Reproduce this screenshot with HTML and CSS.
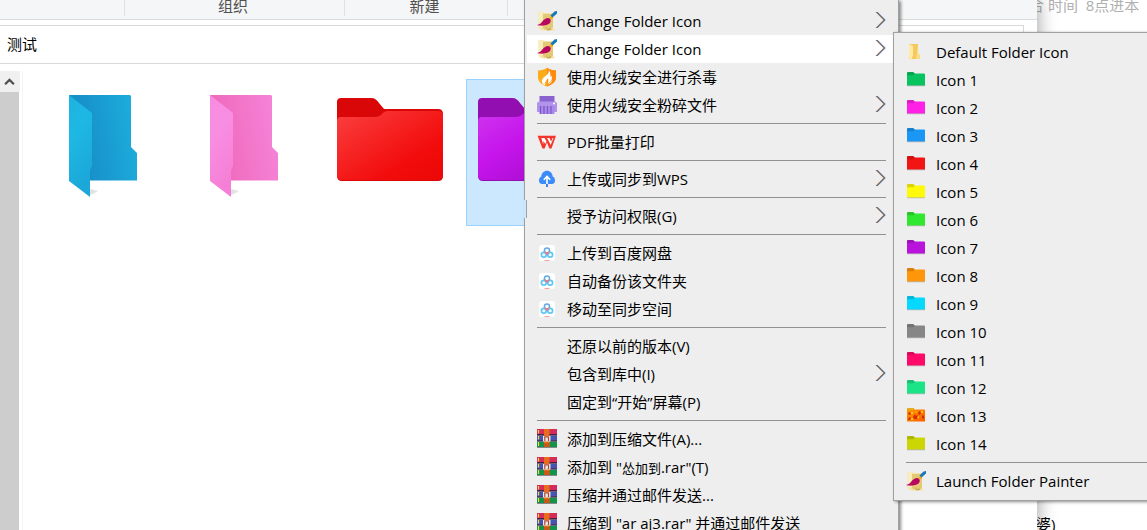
FILE: index.html
```html
<!DOCTYPE html>
<html lang="zh-CN">
<head>
    <meta charset="UTF-8">
    <meta name="viewport" content="width=device-width, initial-scale=1.0">
    <title>测试</title>
    <link rel="stylesheet" href="styles.css">
</head>
<body>
    <!-- shared icons -->
    <svg class="defs" aria-hidden="true">
        <defs>
            <linearGradient id="blue-back" x1="0" y1="0.6" x2="1" y2="0.4"><stop offset="0.2" stop-color="#178fc8"/><stop offset="1" stop-color="#1daddd"/></linearGradient>
            <linearGradient id="blue-front" x1="0" y1="0" x2="0.3" y2="1"><stop offset="0" stop-color="#1fb2e0"/><stop offset="0.4" stop-color="#1eb8e4"/><stop offset="1" stop-color="#1ba7d8"/></linearGradient>
            <linearGradient id="pink-back" x1="0" y1="0.6" x2="1" y2="0.4"><stop offset="0.2" stop-color="#f06cbe"/><stop offset="1" stop-color="#f583d8"/></linearGradient>
            <linearGradient id="pink-front" x1="0" y1="0" x2="0.3" y2="1"><stop offset="0" stop-color="#f78bdf"/><stop offset="0.4" stop-color="#f88ee2"/><stop offset="1" stop-color="#f57fd6"/></linearGradient>
            <linearGradient id="red-front" x1="0" y1="0" x2="1" y2="1"><stop offset="0" stop-color="#fb3f3f"/><stop offset="0.7" stop-color="#f20c0c"/><stop offset="1" stop-color="#ec0808"/></linearGradient>
            <linearGradient id="purple-front" x1="0" y1="0" x2="1" y2="1"><stop offset="0" stop-color="#cf35ee"/><stop offset="0.4" stop-color="#c514ec"/><stop offset="1" stop-color="#9c0cc0"/></linearGradient>
            <linearGradient id="lava" x1="0" y1="0" x2="1" y2="1"><stop offset="0" stop-color="#ff9d00"/><stop offset="1" stop-color="#ff5a00"/></linearGradient>
            <linearGradient id="shade"><stop offset="0" stop-color="#000" stop-opacity="0.12"/><stop offset="1" stop-color="#000" stop-opacity="0"/></linearGradient>
        </defs>
        <symbol id="painter" viewBox="0 0 20 20">
            <path d="M1.500 1H6l1 1h9v15l2 2-4 .7-5-.5-2 .3-3-.5-2.500-2z" fill="#f3e3a4"/>
            <path d="M6 3h10v13l-2 3-3-2-3 2-2-2z" fill="#e4c873"/>
            <path d="M1.500 1H6v15l-4 1z" fill="#f8edbd"/>
            <path d="M9 16l2 2 2-1 1 2-4 .6z" fill="#c5a65a"/>
            <path d="M0 14c2.500-.3 4-1.500 5.500-3.700C7.500 7.500 11 6 13 7.700c1.600 1.600.6 4.600-2.300 5.900-3.200 1.400-7.700 1.400-10.700.4z" fill="#b7065f"/>
            <path d="M0 14c2 .4 4 .2 6-.8l-3 1.800z" fill="#f178b0"/>
            <path d="M12.500 7L14.500 4.500 16.500 6.500l-2.300 2z" fill="#efab18"/>
            <path d="M13.500 4.500L17.500.5l2.500-.5v2.500L15.500 6.500z" fill="#1478bd"/>
        </symbol>
        <symbol id="shield" viewBox="0 0 20 20">
            <path d="M1 3.500C4.500 3.400 7.500 2.500 10 .7c2.500 1.800 5.500 2.700 9 2.800v6.800c0 4.200-3.200 7.200-9 9.300-5.800-2.100-9-5.100-9-9.300z" fill="#faad19"/>
            <path d="M10 .7c2.500 1.800 5.500 2.700 9 2.800v6.800c0 4.200-3.200 7.200-9 9.300z" fill="#ff8a0c"/>
            <path d="M11.800 3c.5 3.500-2 5-4.800 7.200-3 2.600-3 5.800 1 8.100-.5-3.300 1.500-4.800 3-7 .8 2.200.2 3.700-.6 5.500 3.300-1.800 5.400-4.500 4.200-8.300-.3 1-.6 1.300-1.200 1.500.4-2.700-.2-4.900-1.600-7z" fill="#fff"/>
            <path d="M11 18c2.300-1 4-2.700 4.300-5.200-1 1.500-3 2.700-4.300 5.200z" fill="#ffe0a8"/>
        </symbol>
        <symbol id="shredder" viewBox="0 0 20 20">
            <path d="M2.500 1h15v7h-15z" fill="#8a63cf"/>
            <path d="M0 8L2 6.500h16L20 8v9H0z" fill="#b193ec"/>
            <path d="M2.500 11h15v8h-15z" fill="#a98aea"/>
            <path d="M3.500 11v8M7 11v8M10.500 11v8M14 11v8" stroke="#7d57c4" stroke-width="1.200"/>
            <path d="M16 8.500h2" stroke="#fff" stroke-width="1.300"/>
        </symbol>
        <symbol id="wps-pdf" viewBox="0 0 20 20">
            <path d="M.6 3.700H19L14.500 16.500h-2.200L10 10.500l-2.400 6H5.400z" fill="#f5352c"/>
            <path d="M4.300 6h3.200l2 3.200-1.200 2.800-1.900-3-.2 3.500z" fill="#fff"/>
            <path d="M10 6h2.400l1.800 3.700L15.500 6h.9l-2.700 7-2.500-5z" fill="#fff"/>
        </symbol>
        <symbol id="cloud-up" viewBox="0 0 20 20">
            <path d="M5 15c-2 0-3-1.600-3-3.600 0-2 1-3.300 2.300-3.900C4.500 4 7 1.700 10 1.700S15.500 4 15.700 7.500C17 8 18 9.300 18 11.400c0 2-1 3.600-3 3.600z" fill="#3d8bf8"/>
            <path d="M10 15V7.800M6.800 10.800L10 7.500l3.200 3.300" stroke="#fff" stroke-width="1.600" fill="none"/>
            <path d="M10 15v3" stroke="#2f75dc" stroke-width="1.800"/>
        </symbol>
        <symbol id="netdisk" viewBox="0 0 20 20">
            <rect x="2" y="2" width="16" height="16" rx="3" fill="#fff"/>
            <circle cx="10" cy="7.700" r="2.600" fill="none" stroke="#62a9e3" stroke-width="1.500"/>
            <circle cx="6.800" cy="11.800" r="2.400" fill="none" stroke="#5cc8f5" stroke-width="1.700"/>
            <circle cx="13.200" cy="11.800" r="2.400" fill="none" stroke="#5cc8f5" stroke-width="1.700"/>
            <path d="M8 8.700l2 2.100 2-2.100" fill="none" stroke="#f07580" stroke-width="1.500"/>
            <path d="M7.500 17.500h5" stroke="#f4a0a6" stroke-width="1"/>
        </symbol>
        <symbol id="rar" viewBox="0 0 20 20">
            <path d="M0 0h20v5.500H0z" fill="#d42b59"/>
            <path d="M0 6.500h20v5.500H0z" fill="#4654b0"/>
            <path d="M0 12.500h20v6H0z" fill="#12924a"/>
            <path d="M0 5h20v1.500H0zM0 11.500h20v1H0z" fill="#442043"/>
            <path d="M0 18.500h20" stroke="#888" stroke-width="1"/>
            <path d="M7 0h5.500v18H7z" fill="#e96b1c"/>
            <path d="M1.500 1v3.500M1.500 7v3.500M1.500 13v4" stroke="#f5d73b" stroke-width="1.200"/>
            <path d="M6 7h7.500v5.500H6z" fill="#e6ebef"/>
            <path d="M7.800 12V7.800h3.700V12" fill="none" stroke="#b8432a" stroke-width="1.200"/>
            <path d="M7 14h5.500v4H7z" fill="#c95a16"/>
        </symbol>
        <symbol id="folder" viewBox="0 0 20 20">
            <path d="M1 3q0-1 1-1h5.200l1.600 1.500H18q1 0 1 1V15.500H1z" fill="currentColor"/>
            <path d="M1 3q0-1 1-1h5.200L9 3.700 7.500 5.200H1z" fill="#000" fill-opacity="0.15"/>
            <path d="M1 15.800h18" stroke="#000" stroke-opacity="0.25" stroke-width="0.800"/>
        </symbol>
        <symbol id="folder-lava" viewBox="0 0 20 20">
            <path d="M1 3q0-1 1-1h5.200l1.600 1.500H18q1 0 1 1V15.500H1z" fill="url(#lava)"/>
            <path d="M1 2h6.500L9 4H1z" fill="#dfae21"/>
            <path d="M2 7l2-1 1 2-2 1zM7 11l2-3 1 2 2-1-1 4H8zM13 5l2 1-1 3-2-1zM16 9l2 1v3l-2-1zM3 11l2 1-1 2H2z" fill="#d32c06"/>
            <path d="M5 6h2v2H5zM11 11l2-1v3zM15 5h2v2h-2zM5 12h2v2H5zM9 5l2 1-1 1z" fill="#ffc61c"/>
        </symbol>
        <symbol id="folder-default" viewBox="0 0 20 20">
            <path d="M3 2h9v10l2 2v3H3z" fill="#f5c95f"/>
            <path d="M12 3v8l2 2v4h-4z" fill="#fbdc7e"/>
            <path d="M3 2l4 2v10l-1 1v3.500L3 16z" fill="#ffeaa6"/>
        </symbol>
        <symbol id="open-folder-shadow" viewBox="0 0 128 128">
            <path d="M93 100v-5l7 2-2 3zM46 115v-6l8 2-3 2z" fill="url(#shade)"/>
        </symbol>
        <symbol id="arrow" viewBox="0 0 12 18">
            <path d="M.6 1l8 8-8 8" fill="none" stroke="#f0a354" stroke-width="0.700"/>
            <path d="M2.400 1l8 8-8 8" fill="none" stroke="#4c8fe0" stroke-width="0.700"/>
            <path d="M1.500 1l8 8-8 8" fill="none" stroke="#101018" stroke-width="0.900"/>
        </symbol>
    </svg>

    <main class="explorer">
        <header class="ribbon">
            <div class="group group-first"></div>
            <div class="group group-organize">组织</div>
            <div class="group group-new">新建</div>
        </header>
        <div class="address">测试</div>
        <div class="content">
            <div class="scrollbar">
                <button class="scroll-up" aria-label="向上滚动">
                    <svg viewBox="0 0 10 8"><path d="M1 6.500l4-4 4 4" fill="none" stroke="#505050" stroke-width="2"/></svg>
                </button>
                <div class="thumb"></div>
            </div>
            <div class="files">
                <div class="file">
                    <svg viewBox="0 0 128 128">
                        <use href="#open-folder-shadow"/>
                        <path d="M25 15h61l1 1v51l6 6v27.500H40L25 80z" fill="url(#blue-back)"/>
                        <path d="M25 15l23 18v53l-2 4v27L25 101z" fill="url(#blue-front)"/>
                    </svg>
                </div>
                <div class="file">
                    <svg viewBox="0 0 128 128">
                        <use href="#open-folder-shadow"/>
                        <path d="M25 15h61l1 1v51l6 6v27.500H40L25 80z" fill="url(#pink-back)"/>
                        <path d="M25 15l23 18v53l-2 4v27L25 101z" fill="url(#pink-front)"/>
                    </svg>
                </div>
                <div class="file">
                    <svg viewBox="0 0 128 128">
                        <path d="M11 22q0-4 4-4h30c4 0 6 2 8 5l5 6h54q5 0 5 5v62q0 5-5 5H16q-5 0-5-5z" fill="#d90707"/>
                        <path d="M11 41q0-4 4-4h33c4 0 6-1 9-4 2-1.500 3-2 6-2h49q5 0 5 5v59q0 5-5 5H16q-5 0-5-5z" fill="url(#red-front)"/>
                    </svg>
                </div>
                <div class="file selected">
                    <svg viewBox="0 0 128 128">
                        <path d="M11 22q0-4 4-4h30c4 0 6 2 8 5l5 6h54q5 0 5 5v62q0 5-5 5H16q-5 0-5-5z" fill="#920eb0"/>
                        <path d="M11 41q0-4 4-4h33c4 0 6-1 9-4 2-1.500 3-2 6-2h49q5 0 5 5v59q0 5-5 5H16q-5 0-5-5z" fill="url(#purple-front)"/>
                    </svg>
                </div>
            </div>
        </div>
    </main>

    <aside class="behind">
        <p class="behind-top">合 时间&nbsp; 8点进本</p>
        <p class="behind-bottom">婆)</p>
    </aside>

    <nav class="menu">
        <button class="item"><svg class="icon"><use href="#painter"/></svg>Change Folder Icon<svg class="arrow"><use href="#arrow"/></svg></button>
        <button class="item active"><svg class="icon"><use href="#painter"/></svg>Change Folder Icon<svg class="arrow"><use href="#arrow"/></svg></button>
        <button class="item"><svg class="icon"><use href="#shield"/></svg>使用火绒安全进行杀毒</button>
        <button class="item"><svg class="icon"><use href="#shredder"/></svg>使用火绒安全粉碎文件<svg class="arrow"><use href="#arrow"/></svg></button>
        <hr>
        <button class="item"><svg class="icon"><use href="#wps-pdf"/></svg>PDF批量打印</button>
        <hr>
        <button class="item"><svg class="icon"><use href="#cloud-up"/></svg>上传或同步到WPS<svg class="arrow"><use href="#arrow"/></svg></button>
        <hr>
        <button class="item"><span class="icon"></span>授予访问权限(G)<svg class="arrow"><use href="#arrow"/></svg></button>
        <hr>
        <button class="item"><svg class="icon"><use href="#netdisk"/></svg>上传到百度网盘</button>
        <button class="item"><svg class="icon"><use href="#netdisk"/></svg>自动备份该文件夹</button>
        <button class="item"><svg class="icon"><use href="#netdisk"/></svg>移动至同步空间</button>
        <hr>
        <button class="item"><span class="icon"></span>还原以前的版本(V)</button>
        <button class="item"><span class="icon"></span>包含到库中(I)<svg class="arrow"><use href="#arrow"/></svg></button>
        <button class="item"><span class="icon"></span>固定到“开始”屏幕(P)</button>
        <hr>
        <button class="item"><svg class="icon"><use href="#rar"/></svg>添加到压缩文件(A)...</button>
        <button class="item"><svg class="icon"><use href="#rar"/></svg><span>添加到 "<span class="small">怂加到</span>.rar"(T)</span></button>
        <button class="item"><svg class="icon"><use href="#rar"/></svg>压缩并通过邮件发送...</button>
        <button class="item"><svg class="icon"><use href="#rar"/></svg>压缩到 "ar aj3.rar" 并通过邮件发送</button>
        <span class="notch"></span>
    </nav>

    <nav class="menu submenu">
        <button class="item"><svg class="icon"><use href="#folder-default"/></svg>Default Folder Icon</button>
        <button class="item"><svg class="icon green"><use href="#folder"/></svg>Icon 1</button>
        <button class="item"><svg class="icon magenta"><use href="#folder"/></svg>Icon 2</button>
        <button class="item"><svg class="icon blue"><use href="#folder"/></svg>Icon 3</button>
        <button class="item"><svg class="icon red"><use href="#folder"/></svg>Icon 4</button>
        <button class="item"><svg class="icon yellow"><use href="#folder"/></svg>Icon 5</button>
        <button class="item"><svg class="icon lime"><use href="#folder"/></svg>Icon 6</button>
        <button class="item"><svg class="icon purple"><use href="#folder"/></svg>Icon 7</button>
        <button class="item"><svg class="icon orange"><use href="#folder"/></svg>Icon 8</button>
        <button class="item"><svg class="icon cyan"><use href="#folder"/></svg>Icon 9</button>
        <button class="item"><svg class="icon gray"><use href="#folder"/></svg>Icon 10</button>
        <button class="item"><svg class="icon rose"><use href="#folder"/></svg>Icon 11</button>
        <button class="item"><svg class="icon mint"><use href="#folder"/></svg>Icon 12</button>
        <button class="item"><svg class="icon"><use href="#folder-lava"/></svg>Icon 13</button>
        <button class="item"><svg class="icon olive"><use href="#folder"/></svg>Icon 14</button>
        <hr>
        <button class="item"><svg class="icon"><use href="#painter"/></svg>Launch Folder Painter</button>
    </nav>
</body>
</html>
```

FILE: styles.css
```css
* {
    box-sizing: border-box;
}
body {
    margin: 0;
    height: 100vh;
    display: flex;
    position: relative;
    overflow: hidden;
    background: white;
    color: #000;
    font-family: "Open Sans", "Noto Sans CJK SC", sans-serif;
    font-size: 15px;
    line-height: 20px;
}
.defs {
    position: absolute;
    width: 0;
    height: 0;
}

/* explorer window */
.explorer {
    flex: 1;
    display: flex;
    flex-direction: column;
    background: white;
    box-shadow: 0 0 18px rgba(0, 0, 0, 0.4);
    z-index: 1;
}
.ribbon {
    display: flex;
    height: 20px;
    background: #f5f6f7;
    border-bottom: 1px solid #dadbdc;
}
.group {
    height: 16px;
    padding-right: 3px;
    border-right: 1px solid #dfe0e1;
    color: #505050;
    text-align: center;
    line-height: 12px;
}
.group-first {
    width: 125px;
}
.group-organize {
    width: 220px;
}
.group-new {
    width: 163px;
}
.address {
    margin: 5px 13px 0 0;
    padding: 8px 7px;
    height: 39px;
    border: 1px solid #d9d9d9;
    border-left: none;
}
.content {
    flex: 1;
    display: flex;
    padding-top: 7px;
}
.scrollbar {
    width: 23px;
    display: flex;
    flex-direction: column;
    border-right: 1px solid #f4f4f4;
}
.scroll-up {
    width: 20px;
    height: 21px;
    padding: 0 0 0 4px;
    border: none;
    background: #f0f0f0;
    display: flex;
    align-items: center;
}
.scroll-up svg {
    width: 11px;
    height: 9px;
}
.thumb {
    flex: 1;
    width: 19px;
    background: #cdcdcd;
}
.files {
    display: flex;
    gap: 11px;
    padding: 8px 20px;
}
.file {
    width: 130px;
    height: 147px;
    border: 1px solid transparent;
}
.file svg {
    display: block;
    width: 128px;
    height: 128px;
}
.selected {
    background: #cce8ff;
    border-color: #99d1ff;
}

/* window behind */
.behind {
    width: 110px;
    display: flex;
    flex-direction: column;
    justify-content: space-between;
    white-space: nowrap;
}
.behind p {
    margin: 0 0 -4px -1px;
}
.behind .behind-top {
    margin: -5px 0 0 -8px;
    color: #b0b0b0;
}

/* context menus */
.menu {
    position: absolute;
    top: 0;
    left: 524px;
    width: 375px;
    padding: 7px 0 7px 2px;
    background: #eee;
    border: solid #a0a0a0;
    border-width: 0 1px;
    box-shadow: 2px 1px 3px rgba(0, 0, 0, 0.45);
    z-index: 2;
}
.submenu {
    top: 32px;
    left: 893px;
    right: -3px;
    width: auto;
    padding: 5px 0 5px 2px;
    border-width: 1px;
    z-index: 3;
}
.item {
    width: 100%;
    height: 28px;
    padding: 0 10px;
    display: flex;
    align-items: center;
    border: none;
    background: none;
    color: #000;
    font: inherit;
    text-align: left;
    white-space: pre;
}
.item:hover,
.active {
    background: white;
}
.icon {
    width: 20px;
    height: 20px;
    margin-right: 10px;
    flex: none;
}
.arrow {
    width: 12px;
    height: 18px;
    margin: 0 1px 2px auto;
}
.menu hr {
    height: 1px;
    margin: 4px 12px 4px 10px;
    border: none;
    background: #919191;
}
.submenu hr {
    margin-right: 0;
}
.small {
    font-size: 13px;
}
.notch {
    position: absolute;
    top: 200px;
    left: -1px;
    width: 3px;
    height: 18px;
    background: #cce8ff;
    border-right: 1px solid #a0a0a0;
}

/* folder colours */
.green { color: #07c45f; }
.magenta { color: #ff22e6; }
.blue { color: #1a96f5; }
.red { color: #f31414; }
.yellow { color: #fff90a; }
.lime { color: #2fe82f; }
.purple { color: #b914dc; }
.orange { color: #ff960a; }
.cyan { color: #05d9ff; }
.gray { color: #868686; }
.rose { color: #ff0a68; }
.mint { color: #1be487; }
.olive { color: #ccd605; }
```
